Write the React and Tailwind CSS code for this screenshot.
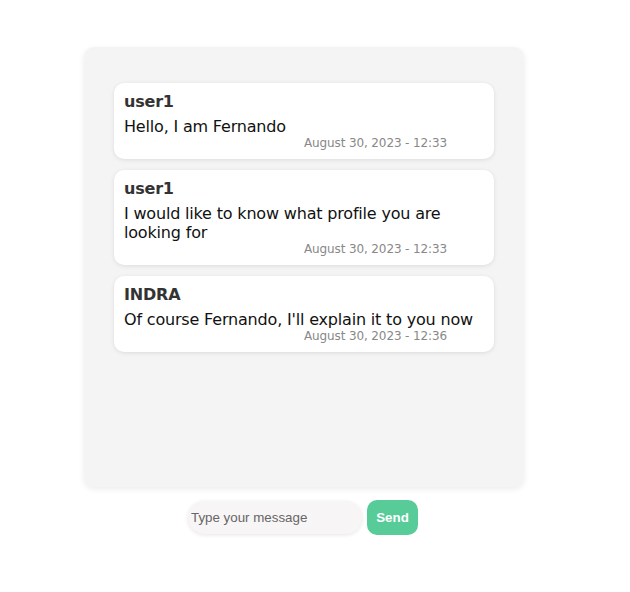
const messages = [
  { id: 1, user: "user1", text: "Hello, I am Fernando", date: "August 30, 2023 - 12:33" },
  { id: 2, user: "user1", text: "I would like to know what profile you are looking for", date: "August 30, 2023 - 12:33" },
  { id: 3, user: "INDRA", text: "Of course Fernando, I'll explain it to you now", date: "August 30, 2023 - 12:36" },
];

function Message({ user, text, date }) {
  return (
    <div className="bg-white rounded-[10px] shadow-[0_1px_4px_rgba(0,0,0,0.1)] px-[10px] pt-[9px] pb-[9px]">
      <div className="font-bold text-[16px] text-[#333] leading-[19px] tracking-[-0.2px]">{user}</div>
      <div className="text-[16px] text-[#111] leading-[19px] mt-[6px] tracking-[-0.18px]">{text}</div>
      <div className="text-[12px] text-[#888] leading-[14px] text-right pr-[37px] tracking-[-0.12px]">{date}</div>
    </div>
  );
}

export default function App() {
  return (
    <div className="w-[630px] h-[592px] bg-white pt-[47px] pl-[84px]" style={{ fontFamily: "'DejaVu Sans', sans-serif" }}>
      <div className="w-[440px] flex flex-col items-center">
        <div className="w-[440px] h-[440px] bg-[#f4f4f4] rounded-[10px] shadow-[0_2px_6px_rgba(0,0,0,0.08)] px-[30px] pt-[36px] flex flex-col gap-[11px]">
          {messages.map((m) => (
            <Message key={m.id} user={m.user} text={m.text} date={m.date} />
          ))}
        </div>
        <div className="flex items-center gap-[5px] mt-[13px] -ml-[2px]" style={{ fontFamily: "'Liberation Sans', Arial, sans-serif" }}>
          <input
            type="text"
            placeholder="Type your message"
            className="w-[174px] h-[33px] rounded-full bg-[#f7f5f5] shadow-[0_1px_4px_rgba(0,0,0,0.1)] pl-[3px] text-[13.33px] outline-none placeholder:text-[#666]"
          />
          <button className="w-[51px] h-[35px] rounded-[10px] bg-[#57cc99] text-white text-[13.33px] font-bold">
            Send
          </button>
        </div>
      </div>
    </div>
  );
}
